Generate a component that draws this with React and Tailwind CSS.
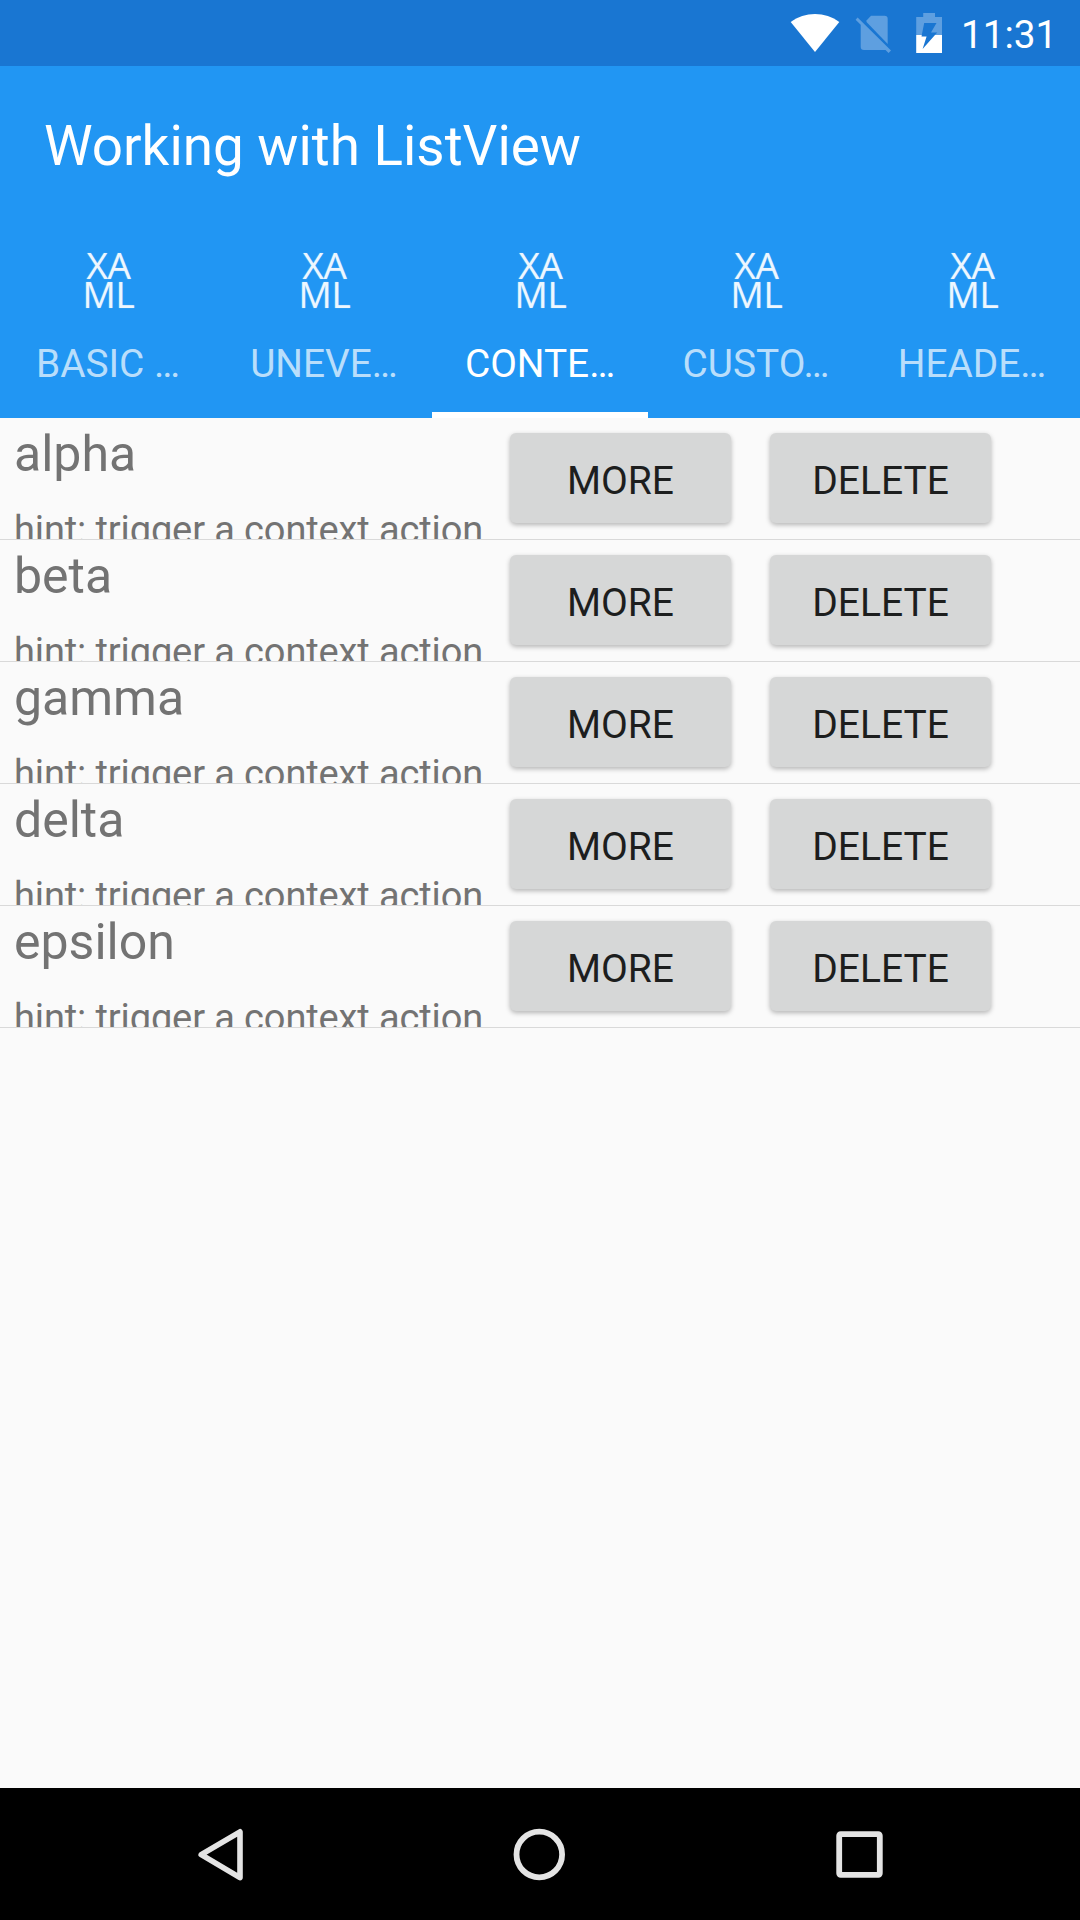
const TABS = ["BASIC …", "UNEVE…", "CONTE…", "CUSTO…", "HEADE…"];
const ROWS = ["alpha", "beta", "gamma", "delta", "epsilon"];

function StatusBar() {
  return (
    <div className="flex h-[66px] shrink-0 items-start bg-[#1976d2] text-white">
      <svg className="ml-[790px] h-[66px] w-[50px] shrink-0" viewBox="790 0 50 66" fill="#fff">
        <path d="M815 52 L790.7 22 C804.5 11.3 825.5 11.3 839.3 22 Z" />
      </svg>
      <svg className="ml-[15px] h-[66px] w-[37px] shrink-0" viewBox="855 0 37 66" fill="#5e9fe0">
        <path d="M871 15.7 H884.5 Q887.7 15.7 887.7 19 V44 L866.5 22 V20.5 Z" />
        <path d="M857.6 17.6 L891 50.6 L888.6 53 L885.5 50 H864 Q860.7 50 860.7 46.7 V24.8 L855.6 19.8 Z" />
      </svg>
      <svg className="ml-[24px] h-[66px] w-[26px] shrink-0" viewBox="916 0 26 66">
        <path d="M916.2 35 V17 H923.2 V13 H935 V17 H942 V35 Z" fill="#5e9fe0" />
        <path d="M916.2 35 H942 V53 H916.2 Z" fill="#fff" />
        <path d="M924.2 23 H936.5 L931 32.5 H937.2 L922.6 49 L926.6 36.5 H921.5 Z" fill="#1976d2" />
      </svg>
      <span className="ml-[19px] mt-[11.5px] text-[38.7px] leading-[45px]">11:31</span>
    </div>
  );
}

function Tab({ label, active }) {
  return (
    <div className="relative flex flex-col items-center">
      <div className="mt-[30px] flex h-[60px] flex-col items-center pl-[1px] font-['Open_Sans'] text-[37px] leading-[29px] font-normal text-white/85 [text-shadow:0_0_1px_rgba(255,255,255,0.5)]">
        <span className="tracking-[-0.5px]">XA</span>
        <span className="tracking-[-0.3px]">ML</span>
      </div>
      <span
        className={`mt-[31px] text-[38.8px] leading-[45px] whitespace-pre ${active ? "text-white" : "text-white/70"}`}
      >
        {label}
      </span>
      {active && <div className="absolute bottom-0 h-[6px] w-full bg-white" />}
    </div>
  );
}

function ActionButton({ children }) {
  return (
    <button className="h-[90px] w-[221px] rounded-[6px] bg-[#d6d7d7] pt-[7px] text-[39px] leading-[45px] text-[#1d1e1e] shadow-[0_2px_5px_rgba(0,0,0,0.28)]">
      {children}
    </button>
  );
}

function Row({ name }) {
  return (
    <div className="flex h-[122px] items-start overflow-hidden border-b border-[#d9d9d9] pl-[14px]">
      <div className="flex w-[496px] shrink-0 flex-col whitespace-nowrap text-[#737373]">
        <span className="mt-[7px] text-[50px] leading-[58px]">{name}</span>
        <span className="mt-[25px] text-[38px] leading-[45px] tracking-[-0.12px]">hint: trigger a context action</span>
      </div>
      <div className="mt-[15px] flex gap-[39px]">
        <ActionButton>MORE</ActionButton>
        <ActionButton>DELETE</ActionButton>
      </div>
    </div>
  );
}

function NavBar() {
  return (
    <div className="flex h-[132px] shrink-0 items-center bg-black">
      <svg className="ml-[197px] h-[54px] w-[48px]" viewBox="197 1827 48 54" fill="none" stroke="#e4e4e4" strokeWidth="5.6" strokeLinejoin="round">
        <path d="M240 1831.8 V1877.6 L201.2 1854.7 Z" />
      </svg>
      <svg className="ml-[267px] h-[54px] w-[54px]" viewBox="512 1827 54 54" fill="none" stroke="#e4e4e4" strokeWidth="5.8">
        <circle cx="539.3" cy="1854.5" r="22.8" />
      </svg>
      <svg className="ml-[266px] h-[54px] w-[54px]" viewBox="832 1827 54 54" fill="none" stroke="#e4e4e4" strokeWidth="5.8">
        <rect x="839.2" y="1834.2" width="40.6" height="40.6" rx="1.5" />
      </svg>
    </div>
  );
}

export default function App() {
  return (
    <div className="flex h-[1920px] w-[1080px] flex-col overflow-hidden bg-[#fafafa] font-[Roboto,sans-serif]">
      <StatusBar />
      <header className="h-[352px] shrink-0 bg-[#2196f3]">
        <h1 className="flex h-[154px] items-center pt-[6px] pl-[44px] text-[54.8px] leading-[64px] font-normal text-white">
          Working with ListView
        </h1>
        <div className="grid h-[198px] grid-cols-5">
          {TABS.map((label, i) => (
            <Tab key={label} label={label} active={i === 2} />
          ))}
        </div>
      </header>
      <main className="flex-1">
        {ROWS.map((name) => (
          <Row key={name} name={name} />
        ))}
      </main>
      <NavBar />
    </div>
  );
}
